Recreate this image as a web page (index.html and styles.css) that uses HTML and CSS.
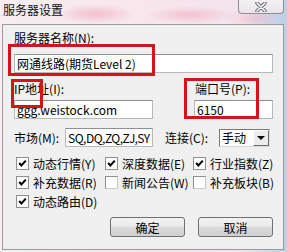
FILE: index.html
```html
<!DOCTYPE html>
<html lang="zh-CN">
<head>
    <meta charset="UTF-8">
    <title>服务器设置</title>
    <link rel="stylesheet" href="styles.css">
</head>
<body>

<div class="window">
    <div class="titlebar">
        <span class="title">服务器设置</span>
        <div class="close-btn">
            <svg width="12" height="10" viewBox="0 0 12 10">
                <path d="M2 1 L10 9 M10 1 L2 9" stroke="#5e6670" stroke-width="3.4" stroke-linecap="round"/>
                <path d="M2 1 L10 9 M10 1 L2 9" stroke="#ffffff" stroke-width="1.6" stroke-linecap="round"/>
            </svg>
        </div>
    </div>

    <div class="client">
        <div class="label">服务器名称(N):</div>
        <input class="edit edit-name" type="text" value="网通线路(期货Level 2)">

        <div class="addr-row">
            <div class="ip-col">
                <div class="label">IP地址(I):</div>
                <input class="edit" type="text" value="ggg.weistock.com">
            </div>
            <div class="port-col">
                <div class="label">端口号(P):</div>
                <input class="edit" type="text" value="6150">
            </div>
        </div>

        <div class="market-row">
            <span class="label market-label">市场(M):</span>
            <input class="edit edit-market" type="text" value="SQ,DQ,ZQ,ZJ,SY">
            <span class="label link-label">连接(C):</span>
            <div class="combo">
                <span class="combo-text">手动</span>
                <span class="combo-btn"><span class="arrow"></span></span>
            </div>
        </div>

        <div class="checks">
            <label class="check"><span class="box on"></span>动态行情(Y)</label>
            <label class="check"><span class="box on"></span>深度数据(E)</label>
            <label class="check"><span class="box on"></span>行业指数(Z)</label>
            <label class="check"><span class="box on"></span>补充数据(R)</label>
            <label class="check"><span class="box"></span>新闻公告(W)</label>
            <label class="check"><span class="box"></span>补充板块(B)</label>
            <label class="check"><span class="box on"></span>动态路由(D)</label>
        </div>

        <div class="buttons">
            <button class="btn">确定</button>
            <button class="btn">取消</button>
        </div>

        <!-- red highlight frames drawn over the dialog -->
        <div class="mark mark-name"></div>
        <div class="mark mark-ip"></div>
        <div class="mark mark-port"></div>
    </div>
</div>

</body>
</html>
```

FILE: styles.css
```css
body {
    margin: 0;
    padding: 0;
    font-family: "Noto Sans CJK SC", "Liberation Sans", sans-serif;
    font-size: 12px;
    color: #000;
}
.window {
    width: 287px;
    height: 252px;
    overflow: hidden;
    background:
        radial-gradient(ellipse 40px 10px at 95px 14px, rgba(236, 140, 165, 0.45), transparent),
        radial-gradient(ellipse 45px 9px at 190px 15px, rgba(236, 140, 165, 0.4), transparent),
        radial-gradient(ellipse 30px 10px at 255px 18px, rgba(236, 150, 170, 0.35), transparent),
        linear-gradient(to right, #f6eef1 0%, #f8e6ec 50%, #f3e4ec 85%, #b9d3ea 99%);
}
.titlebar {
    height: 24px;
    display: flex;
    align-items: flex-start;
}
.title {
    padding: 2px 0 0 3px;
    line-height: 16px;
    font-size: 12px;
    color: #111;
}
.close-btn {
    margin-left: auto;
    margin-right: 3px;
    width: 46px;
    height: 14px;
    box-sizing: border-box;
    border: 1px solid #8d8f94;
    border-top: none;
    border-radius: 0 0 4px 4px;
    background: linear-gradient(#f4f0f2, #e9e4e8);
    display: flex;
    align-items: center;
    justify-content: center;
}
.client {
    position: relative;
    margin: 0 3px 0 2px;
    height: 226px;
    box-sizing: border-box;
    border: 1px solid #9a9a9a;
    background: #f0f0f0;
    padding: 6px 10px 0 11px;
}
.label {
    line-height: 14px;
    height: 14px;
    white-space: nowrap;
}
.edit {
    display: block;
    box-sizing: border-box;
    height: 19px;
    margin: 0;
    padding: 0 2px;
    border: 1px solid #b7b9bd;
    border-top-color: #8e9094;
    background: #fff;
    font-family: inherit;
    font-size: 12px;
    color: #000;
    outline: none;
}
.edit-name {
    width: 259px;
    margin-top: 9px;
}
.addr-row {
    display: flex;
    margin-top: 9px;
}
.addr-row .edit {
    margin-top: 4px;
}
.ip-col {
    width: 139px;
}
.ip-col .edit {
    width: 139px;
}
.port-col {
    margin-left: 41px;
    width: 79px;
}
.port-col .label {
    padding-left: 1px;
}
.port-col .edit {
    width: 79px;
}
.market-row {
    display: flex;
    align-items: center;
    height: 19px;
    margin-top: 9px;
}
.market-label {
    width: 51px;
}
.edit-market {
    width: 88px;
    letter-spacing: -0.5px;
}
.link-label {
    margin-left: 12px;
    width: 54px;
}
.combo {
    display: flex;
    width: 51px;
    height: 18px;
    box-sizing: border-box;
    border: 1px solid #7a7a7a;
    border-right-color: #d8d8d8;
    border-bottom-color: #d8d8d8;
    background: #fff;
}
.combo-text {
    flex: 1;
    padding-left: 2px;
    line-height: 16px;
}
.combo-btn {
    width: 16px;
    height: 16px;
    box-sizing: border-box;
    border: 1px solid #fff;
    border-right-color: #6e6e6e;
    border-bottom-color: #6e6e6e;
    background: #ececec;
    display: flex;
    align-items: center;
    justify-content: center;
}
.arrow {
    width: 0;
    height: 0;
    border-left: 4px solid transparent;
    border-right: 4px solid transparent;
    border-top: 4px solid #000;
}
.checks {
    display: grid;
    grid-template-columns: 89px 88px auto;
    grid-auto-rows: 19px;
    margin-top: 7px;
    padding-left: 2px;
}
.check {
    display: flex;
    align-items: center;
    gap: 4px;
    white-space: nowrap;
}
.box {
    width: 13px;
    height: 13px;
    box-sizing: border-box;
    border: 1px solid #8e8f8f;
    border-right-color: #c9c9c9;
    border-bottom-color: #c9c9c9;
    background: #fff;
}
.box.on {
    border-color: #8e8f8f;
    background: #fff url("data:image/svg+xml;utf8,<svg xmlns='http://www.w3.org/2000/svg' width='11' height='11'><path d='M2.2 5 L4.4 7.4 L8.8 2.6' fill='none' stroke='black' stroke-width='2'/></svg>") no-repeat center;
}
.buttons {
    display: flex;
    justify-content: flex-end;
    gap: 13px;
    margin-top: 6px;
}
.btn {
    width: 75px;
    height: 20px;
    padding: 0;
    border: 1px solid #707070;
    border-radius: 3px;
    background: linear-gradient(#f2f2f2 0%, #ebebeb 45%, #dddddd 50%, #cfcfcf 100%);
    font-family: inherit;
    font-size: 12px;
    color: #000;
}
.mark {
    position: absolute;
    box-sizing: border-box;
    border: 3px solid #d4141c;
}
.mark-name {
    left: 5px;
    top: 19px;
    width: 147px;
    height: 32px;
}
.mark-ip {
    left: 8px;
    top: 54px;
    width: 32px;
    height: 29px;
}
.mark-port {
    left: 181px;
    top: 53px;
    width: 75px;
    height: 41px;
}
```
